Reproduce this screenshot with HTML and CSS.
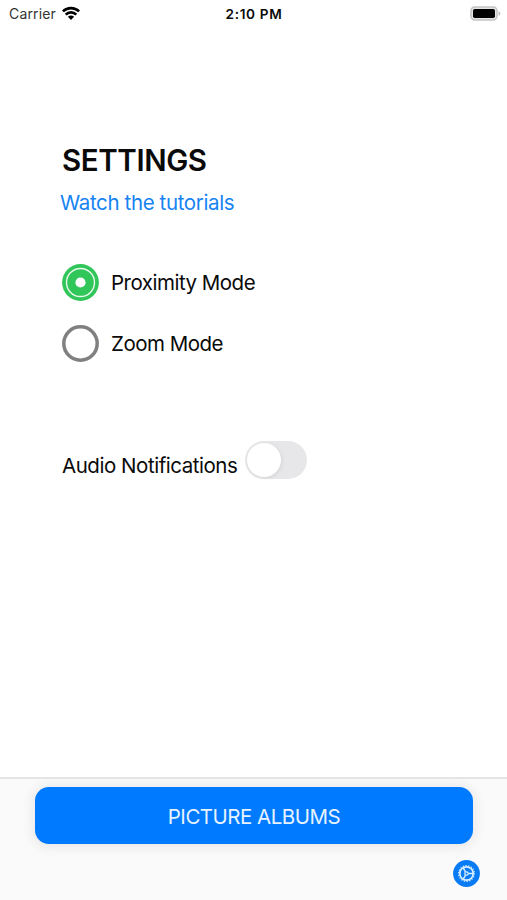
FILE: index.html
```html
<!DOCTYPE html>
<html lang="en">
<head>
  <meta charset="UTF-8" />
  <meta name="viewport" content="width=device-width, initial-scale=1.0"/>
  <title>Settings</title>
  <link rel="stylesheet" href="styles.css">
</head>
<body>
<div class="screen">
  <header class="status-bar">
    <div class="carrier">
      <span>Carrier</span>
      <svg class="wifi" viewBox="0 0 18 14" width="18" height="14">
        <g fill="none" stroke="#000" stroke-width="2.7">
          <path d="M0.9 5.4C5.5 0.9 12.5 0.9 17.1 5.4"/>
          <path d="M3.7 8.6C6.7 5.7 11.3 5.7 14.3 8.6"/>
        </g>
        <path d="M5.9 10.8C7.7 9.1 10.3 9.1 12.1 10.8L9 13.9Z"/>
      </svg>
    </div>
    <span class="time">2:10 PM</span>
    <svg class="battery" viewBox="0 0 31 15" width="31" height="15">
      <rect x="1" y="1" width="26" height="13" rx="4" fill="#e4e4e4" stroke="#c4c4c4" stroke-width="1.6"/>
      <rect x="3" y="3" width="22" height="9" rx="1.8"/>
      <path d="M28.6 5.2C30.8 6 30.8 9 28.6 9.8Z" fill="#b5b5b5"/>
    </svg>
  </header>

  <main class="content">
    <h1>SETTINGS</h1>
    <a class="tutorials" href="#">Watch the tutorials</a>

    <div class="modes">
      <label class="mode">
        <input type="radio" name="mode" checked>
        <svg class="radio" viewBox="0 0 37 37" width="37" height="37">
          <circle cx="18.5" cy="18.5" r="18.4" fill="#31c659"/>
          <circle cx="18.5" cy="18.5" r="14" fill="none" stroke="#e9faee" stroke-width="1.4"/>
          <circle cx="18.5" cy="18.5" r="5.1" fill="#fff"/>
        </svg>
        <span>Proximity Mode</span>
      </label>
      <label class="mode">
        <input type="radio" name="mode">
        <svg class="radio" viewBox="0 0 37 37" width="37" height="37">
          <circle cx="18.5" cy="18.5" r="16.7" fill="#fff" stroke="#808080" stroke-width="3.5"/>
        </svg>
        <span>Zoom Mode</span>
      </label>
    </div>

    <div class="audio">
      <span>Audio Notifications</span>
      <div class="toggle"><div class="knob"></div></div>
    </div>
  </main>

  <footer class="footer">
    <button class="albums">PICTURE ALBUMS</button>
    <svg class="gear" viewBox="0 0 27 27" width="27" height="27">
      <circle cx="13.5" cy="13.5" r="13.4" fill="#087bf5"/>
      <g fill="none" stroke="#d9efff">
        <circle cx="13.5" cy="13.5" r="6.7" stroke-width="1.7"/>
        <circle cx="13.5" cy="13.5" r="7.9" stroke-width="1.2" stroke-dasharray="1.3 1.458"/>
        <circle cx="13.5" cy="13.5" r="1.7" stroke-width="1.2"/>
        <path d="M15.2 13.5H20.3M12.5 11.9L10.1 7.6M12.5 15.1L10.1 19.4" stroke-width="1.5"/>
      </g>
    </svg>
  </footer>
</div>
</body>
</html>
```

FILE: styles.css
```css
* {
  box-sizing: border-box;
}

body {
  margin: 0;
  background-color: #fff;
  color: #0a0a0a;
  font-family: Inter, "Liberation Sans", sans-serif;
}

.screen {
  display: flex;
  flex-direction: column;
  height: 900px;
  overflow: hidden;
}

.status-bar {
  display: grid;
  grid-template-columns: 1fr auto 1fr;
  align-items: center;
  height: 28px;
  padding: 0 6px 0 9px;
}

.carrier {
  display: flex;
  align-items: center;
  gap: 6px;
  margin-top: -1px;
  font-size: 14px;
  letter-spacing: 0.15px;
  color: #333;
}

.wifi {
  margin-top: -2px;
}

.time {
  margin-right: 2px;
  font-size: 13.6px;
  font-weight: 600;
  line-height: 16px;
  letter-spacing: 0.65px;
}

.battery {
  justify-self: end;
  margin-top: -2px;
}

.content {
  flex: 1;
  padding: 115px 62px 0;
  font-size: 20.5px;
  line-height: 26px;
  letter-spacing: -0.5px;
}

h1 {
  margin: 0;
  font-size: 29.5px;
  font-weight: 600;
  line-height: 34px;
  letter-spacing: -0.4px;
}

.tutorials {
  display: block;
  margin: 13px 0 0 -2px;
  color: #1683f2;
  letter-spacing: -0.37px;
  text-decoration: none;
}

.modes {
  display: flex;
  flex-direction: column;
  gap: 24px;
  margin-top: 48px;
}

.mode {
  display: flex;
  align-items: center;
  gap: 12px;
}

.mode input {
  display: none;
}

.audio {
  display: flex;
  align-items: flex-start;
  gap: 8px;
  margin-top: 79px;
}

.audio span {
  margin-top: 12px;
  letter-spacing: -0.46px;
}

.toggle {
  width: 62px;
  height: 38px;
  padding: 2px;
  border-radius: 19px;
  background-color: #e7e7e9;
}

.knob {
  width: 34px;
  height: 34px;
  border-radius: 50%;
  background-color: #fff;
  box-shadow: 1px 1px 4px rgba(0, 0, 0, 0.08);
}

.footer {
  display: flex;
  flex-direction: column;
  height: 123px;
  padding: 8px 27px 0 35px;
  border-top: 2px solid #e5e5e5;
  background-color: #fafafa;
  overflow: hidden;
}

.albums {
  width: 438px;
  height: 57px;
  padding: 2px 0 0;
  border: none;
  border-radius: 14px;
  background-color: #007aff;
  box-shadow: 0 1px 12px 3px rgba(0, 0, 0, 0.07);
  color: #e6f3ff;
  font-family: inherit;
  font-size: 20.5px;
  letter-spacing: -0.5px;
}

.gear {
  align-self: flex-end;
  margin-top: 16px;
}
```
